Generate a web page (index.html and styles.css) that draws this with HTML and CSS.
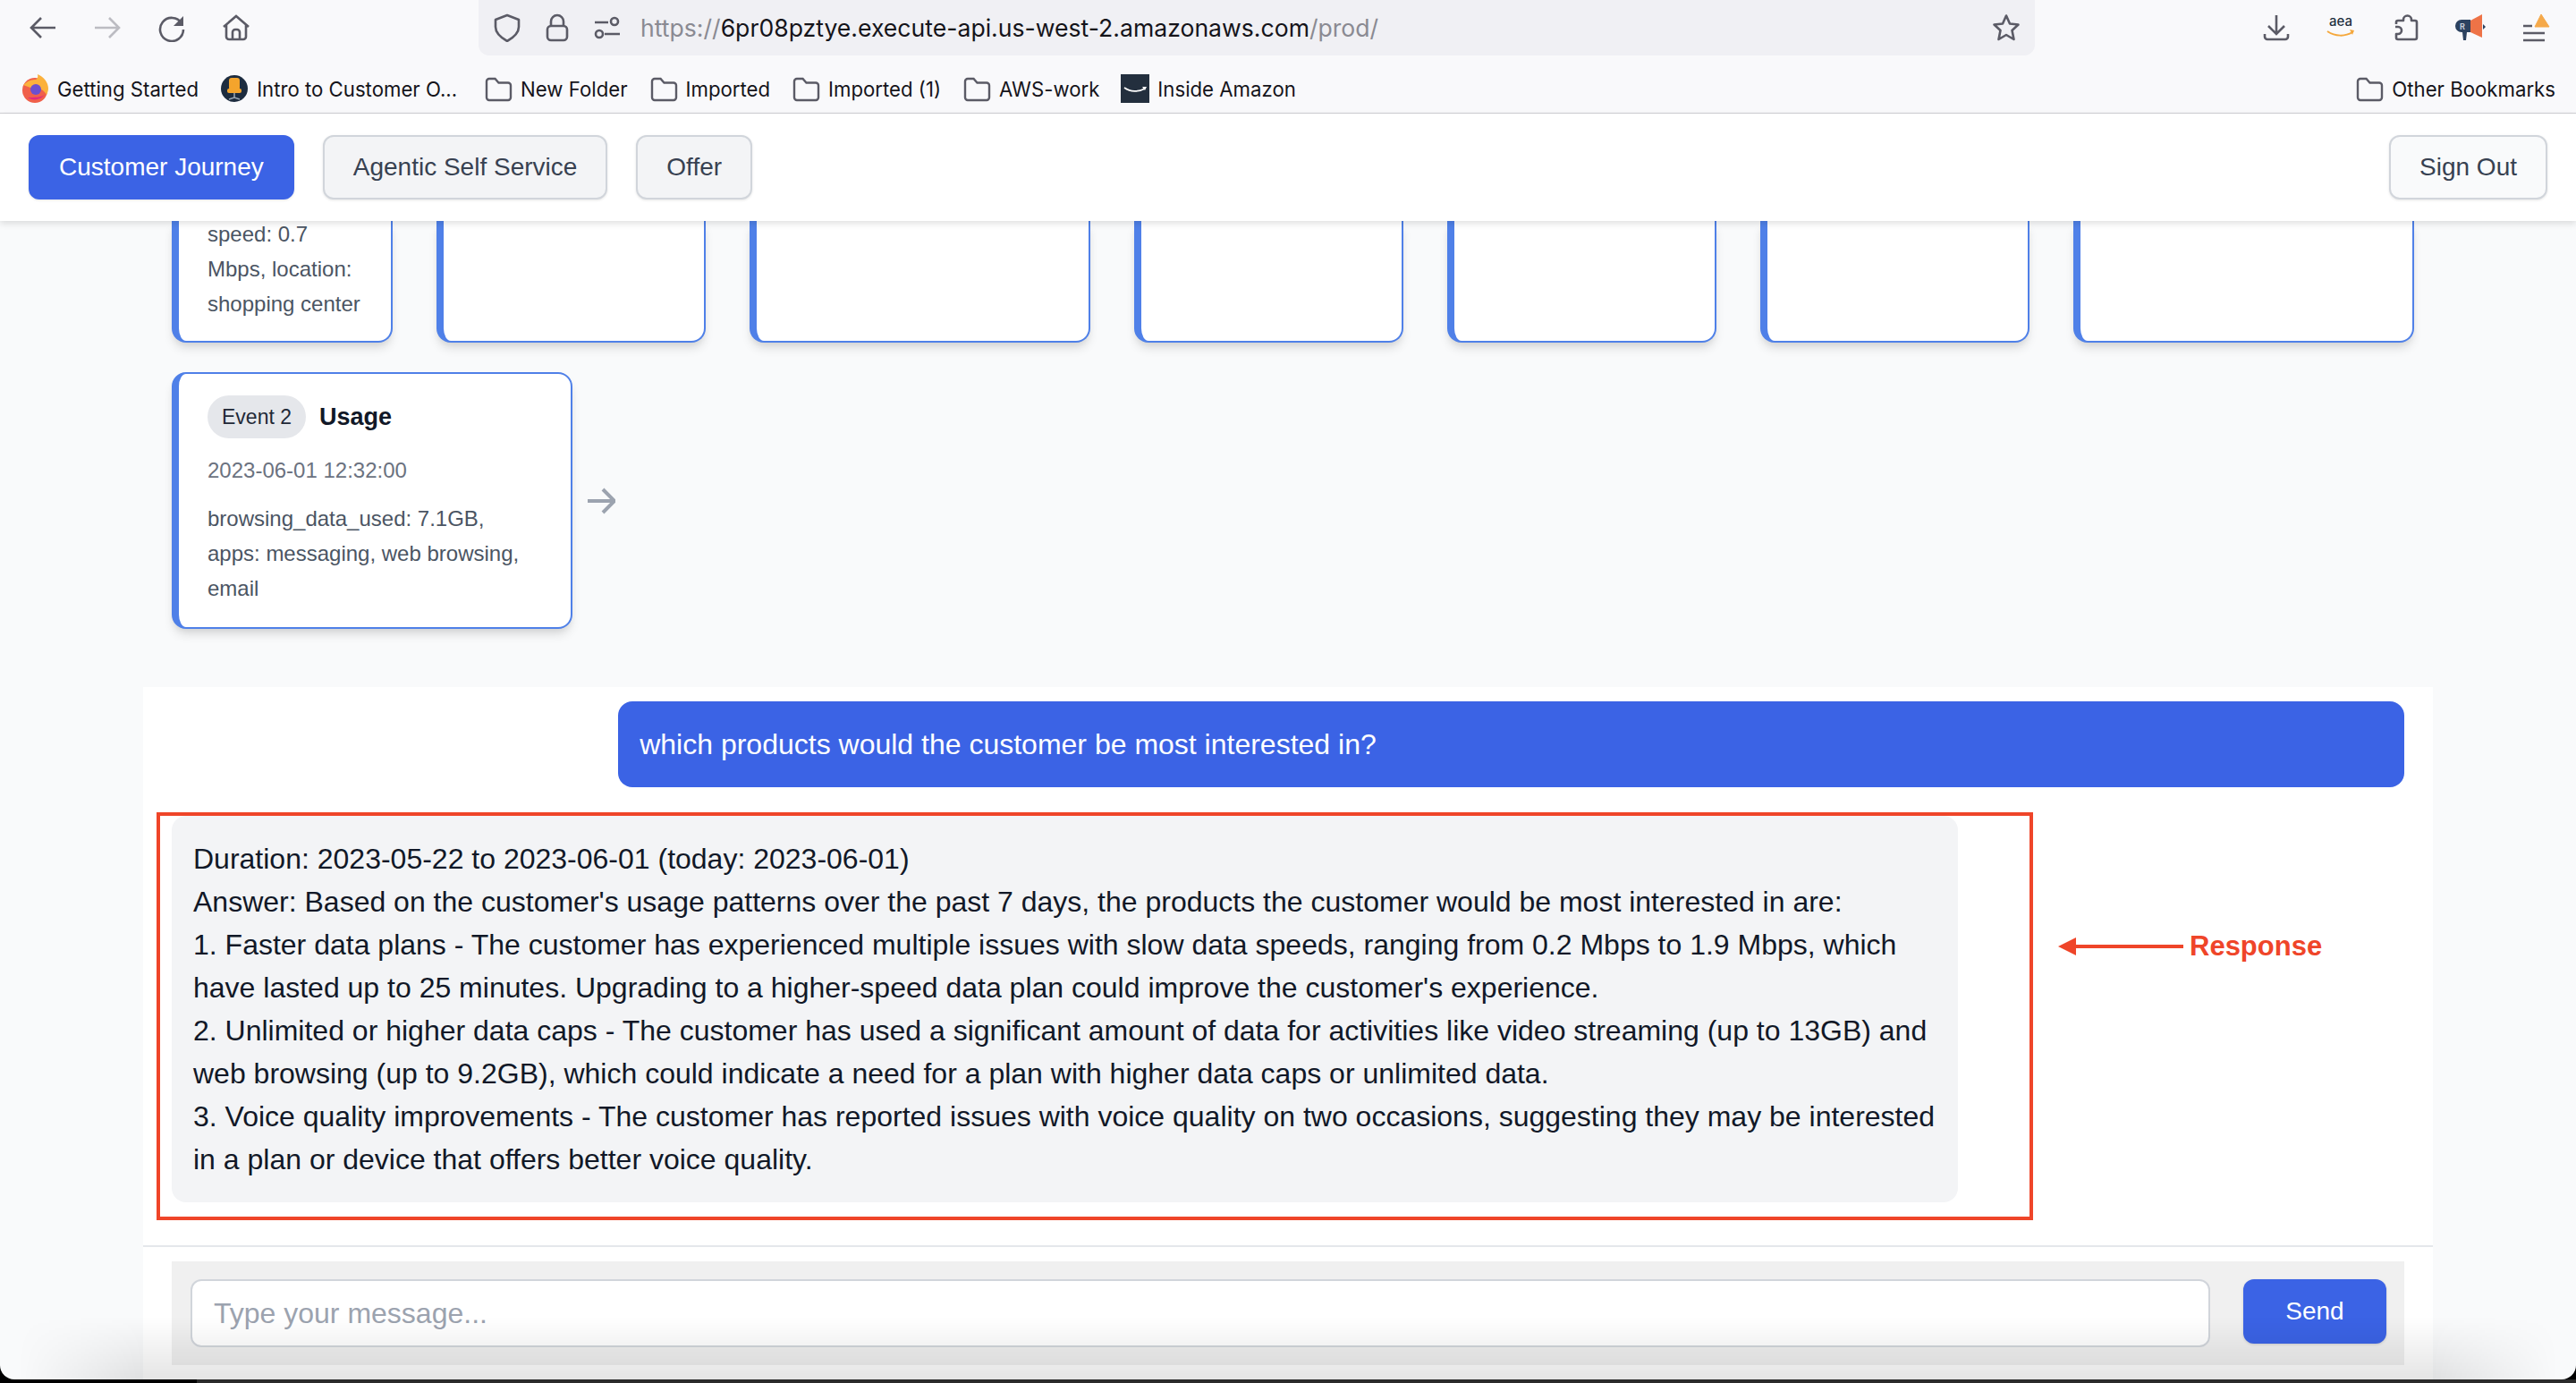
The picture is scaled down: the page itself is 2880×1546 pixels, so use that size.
FILE: index.html
```html
<!DOCTYPE html>
<html lang="en">
<head>
    <meta charset="UTF-8">
    <title>Customer Journey</title>
    <link rel="stylesheet" href="styles.css">
</head>
<body>
    <svg class="icon-defs" width="0" height="0">
        <symbol id="folder" viewBox="0 0 32 32">
            <path d="M3 8a3 3 0 0 1 3-3h6.500l4 4.500H27a3 3 0 0 1 3 3V26a3 3 0 0 1-3 3H6a3 3 0 0 1-3-3z" fill="none" stroke="#5b5b66" stroke-width="2.400"/>
        </symbol>
    </svg>

    <div class="window">
        <!-- browser toolbar -->
        <header class="browser-bar">
            <div class="toolbar">
                <svg class="icon" viewBox="0 0 32 32"><path d="M30 16H3M14 5 3 16l11 11"/></svg>
                <svg class="icon icon-off" viewBox="0 0 32 32"><path d="M2 16h27M18 5l11 11-11 11"/></svg>
                <svg class="icon" viewBox="0 0 32 32"><path d="M27 11a13 13 0 1 0 2 7"/><path class="solid" d="M29 3v11H18z"/></svg>
                <svg class="icon" viewBox="0 0 32 32"><path d="M2 15 16 3l14 12M5 13v13a3 3 0 0 0 3 3h16a3 3 0 0 0 3-3V13M12 29v-8a3 3 0 0 1 3-3h2a3 3 0 0 1 3 3v8"/></svg>

                <div class="url-bar">
                    <svg class="icon" viewBox="0 0 32 32"><path d="M16 2l13 5v8c0 7-6 12-13 16C9 27 3 22 3 15V7z" stroke-linejoin="round"/></svg>
                    <svg class="icon" viewBox="0 0 32 32"><rect x="5" y="14" width="22" height="16" rx="4"/><path d="M9 14V9a7 7 0 0 1 14 0v5"/></svg>
                    <svg class="icon" viewBox="0 0 32 32"><path d="M2 10h15M13 23h17"/><circle cx="24" cy="9" r="4"/><circle cx="7" cy="23" r="4"/></svg>
                    <span class="url"><span class="url-dim">https://</span>6pr08pztye.execute-api.us-west-2.amazonaws.com<span class="url-dim">/prod/</span></span>
                    <svg class="icon star" viewBox="0 0 32 32"><path d="M16 2.500l4 9 9.500 1-7 6.500 2 10-8.500-5-8.500 5 2-10-7-6.500 9.500-1z" stroke-linejoin="round"/></svg>
                </div>

                <svg class="icon" viewBox="0 0 32 32"><path d="M16 2v21M7 14l9 9 9-9M3 23v3a3 3 0 0 0 3 3h20a3 3 0 0 0 3-3v-3"/></svg>
                <svg class="addon" viewBox="0 0 32 32">
                    <text x="16" y="14" class="aea">aea</text>
                    <path d="M1 20c9 6 20 6 28 1" fill="none" stroke="#f5a83c" stroke-width="2"/>
                    <path d="M26 18l5 1-2 5z" fill="#f5a83c"/>
                </svg>
                <svg class="icon" viewBox="0 0 32 32"><path d="M6 12V10a2 2 0 0 1 2-2h6V7a4.500 4.500 0 0 1 9 0v1h4a2 2 0 0 1 2 2v17a2 2 0 0 1-2 2H8a2 2 0 0 1-2-2v-4h2a4 4 0 0 0 0-8H5" stroke-linejoin="round"/></svg>
                <svg class="addon" viewBox="0 0 32 32">
                    <path d="M7 7h10v14h-4l-1 9H9l-1-9H7a7 7 0 0 1 0-14z" fill="#2c4260"/>
                    <path d="M17 8 30 1v26l-13-6z" fill="#ee7347"/>
                    <path d="M31 12l3 3-3 3z" fill="#2c4260"/>
                    <text x="8" y="18" class="addon-r">R</text>
                </svg>
                <svg class="addon menu-icon" viewBox="0 0 32 32">
                    <path d="M4 14h10M4 22h24M4 30h24" stroke="#5b5b66" stroke-width="2.400" fill="none"/>
                    <path d="M24 1l9 14H17z" fill="#f5a94a" stroke="#f5a94a" stroke-linejoin="round"/>
                </svg>
            </div>

            <nav class="bookmarks">
                <a class="bookmark">
                    <svg class="favicon" viewBox="0 0 32 32">
                        <circle cx="16" cy="18" r="14" fill="#f0604a"/>
                        <path d="M3 12c4-4 8-6 13-6 2 0 4-2 3-6 7 3 12 9 12 16 0 2-1 5-2 7-3-6-10-9-18-8z" fill="#fbb13c"/>
                        <circle cx="17" cy="17" r="6" fill="#6b4fcf"/>
                        <path d="M8 26c6 4 14 3 19-3-4 3-12 3-19 3z" fill="#e22a7c"/>
                    </svg>
                    Getting Started
                </a>
                <a class="bookmark bookmark-long">
                    <svg class="favicon" viewBox="0 0 32 32">
                        <circle cx="16" cy="16" r="15" fill="#1d2c3f"/>
                        <rect x="10" y="4" width="12" height="14" rx="3" fill="#f4a42c"/>
                        <rect x="8" y="16" width="16" height="5" rx="2" fill="#f4a42c"/>
                        <path d="M16 21v5M10 28l6-2 6 2" stroke="#9aa6b2" stroke-width="1.500" fill="none"/>
                    </svg>
                    Intro to Customer O...
                </a>
                <a class="bookmark"><svg class="favicon"><use href="#folder"/></svg>New Folder</a>
                <a class="bookmark"><svg class="favicon"><use href="#folder"/></svg>Imported</a>
                <a class="bookmark"><svg class="favicon"><use href="#folder"/></svg>Imported (1)</a>
                <a class="bookmark"><svg class="favicon"><use href="#folder"/></svg>AWS-work</a>
                <a class="bookmark">
                    <svg class="favicon" viewBox="0 0 32 32">
                        <rect width="32" height="32" fill="#232f3e"/>
                        <path d="M4 15c7 5 16 5 23 1" fill="none" stroke="#fff" stroke-width="1.600"/>
                        <path d="M24 14l5 0-2 4z" fill="#fff"/>
                    </svg>
                    Inside Amazon
                </a>
                <a class="bookmark bookmark-end"><svg class="favicon"><use href="#folder"/></svg>Other Bookmarks</a>
            </nav>
        </header>

        <!-- app navigation -->
        <div class="app-nav">
            <button class="nav-btn nav-btn-active">Customer Journey</button>
            <button class="nav-btn">Agentic Self Service</button>
            <button class="nav-btn">Offer</button>
            <button class="nav-btn sign-out">Sign Out</button>
        </div>

        <main class="page">
            <section class="timeline">
                <div class="event-row event-row-cut">
                    <div class="event-card w-1">
                        <p class="event-text">speed: 0.7<br>Mbps, location:<br>shopping center</p>
                    </div>
                    <div class="event-card w-2"></div>
                    <div class="event-card w-3"></div>
                    <div class="event-card w-4"></div>
                    <div class="event-card w-4"></div>
                    <div class="event-card w-4"></div>
                    <div class="event-card w-3"></div>
                </div>
                <div class="event-row">
                    <div class="event-card w-full">
                        <div class="event-head">
                            <span class="event-pill">Event 2</span>
                            <span class="event-title">Usage</span>
                        </div>
                        <p class="event-date">2023-06-01 12:32:00</p>
                        <p class="event-text">browsing_data_used: 7.1GB,<br>apps: messaging, web browsing,<br>email</p>
                    </div>
                    <svg class="event-arrow" viewBox="0 0 32 32"><path d="M1 16h29M18 3l13 13-13 13"/></svg>
                </div>
            </section>

            <section class="chat">
                <div class="messages">
                    <div class="bubble bubble-user">which products would the customer be most interested in?</div>
                    <div class="bubble bubble-bot">
                        Duration: 2023-05-22 to 2023-06-01 (today: 2023-06-01)<br>
                        Answer: Based on the customer's usage patterns over the past 7 days, the products the customer would be most interested in are:<br>
                        1. Faster data plans - The customer has experienced multiple issues with slow data speeds, ranging from 0.2 Mbps to 1.9 Mbps, which have lasted up to 25 minutes. Upgrading to a higher-speed data plan could improve the customer's experience.<br>
                        2. Unlimited or higher data caps - The customer has used a significant amount of data for activities like video streaming (up to 13GB) and web browsing (up to 9.2GB), which could indicate a need for a plan with higher data caps or unlimited data.<br>
                        3. Voice quality improvements - The customer has reported issues with voice quality on two occasions, suggesting they may be interested in a plan or device that offers better voice quality.
                    </div>
                    <div class="note-box"></div>
                    <div class="note-label">
                        <span class="note-head"></span>
                        <span class="note-line"></span>
                        <span class="note-text">Response</span>
                    </div>
                </div>
                <form class="chat-form">
                    <input class="chat-input" type="text" placeholder="Type your message...">
                    <button class="send-btn" type="button">Send</button>
                </form>
            </section>
        </main>

        <div class="screen-shade"></div>
    </div>
    <div class="dock-edge"></div>
</body>
</html>
```

FILE: styles.css
```css
* {
    box-sizing: border-box;
}

html, body {
    margin: 0;
    height: 1546px;
    overflow: hidden;
    background-color: #000;
}

body {
    font-family: "Liberation Sans", Arial, sans-serif;
    position: relative;
}

.icon-defs {
    position: absolute;
}

.window {
    position: relative;
    height: 1542px;
    display: flex;
    flex-direction: column;
    border-radius: 0 0 16px 16px;
    overflow: hidden;
    background-color: #f9fafb;
}

.dock-edge {
    height: 4px;
    margin-left: 220px;
    background-color: #2b2b2b;
}

/* browser chrome */
.browser-bar {
    flex: none;
    height: 127px;
    background-color: #f9f9fb;
    border-bottom: 1px solid #cfcfd3;
    font-family: Inter, "Noto Sans", sans-serif;
}

.toolbar {
    height: 62px;
    display: flex;
    align-items: center;
    gap: 40px;
    padding: 0 32px;
}

.icon {
    flex: none;
    width: 32px;
    height: 32px;
    fill: none;
    stroke: #5b5b66;
    stroke-width: 2.600;
}

.icon-off {
    stroke: #bcbcc2;
}

.icon .solid {
    fill: #5b5b66;
    stroke: none;
}

.addon {
    flex: none;
    width: 32px;
    height: 32px;
    overflow: visible;
}

.aea {
    font-family: Inter, sans-serif;
    font-size: 15px;
    font-weight: 500;
    fill: #232f3e;
    text-anchor: middle;
}

.addon-r {
    font-family: Inter, sans-serif;
    font-size: 9px;
    font-weight: 700;
    fill: #c3cbd6;
    text-anchor: middle;
}

.url-bar {
    flex: none;
    width: 1740px;
    height: 62px;
    margin: 0 214px 0 215px;
    padding: 0 16px;
    display: flex;
    align-items: center;
    gap: 24px;
    background-color: #f0f0f4;
    border-radius: 0 0 12px 12px;
}

.url {
    flex: 1;
    margin-left: -3px;
    font-size: 26.600px;
    color: #15141a;
    white-space: nowrap;
}

.url-dim {
    color: #8a8a92;
}

.bookmarks {
    height: 64px;
    display: flex;
    align-items: center;
    gap: 24px;
    padding: 10px 23px 0 23px;
}

.bookmark {
    display: flex;
    align-items: center;
    gap: 9px;
    font-size: 22.200px;
    color: #15141a;
    white-space: nowrap;
}

.bookmark-long {
    margin-right: 6px;
}

.bookmark-end {
    margin-left: auto;
}

.favicon {
    flex: none;
    width: 32px;
    height: 32px;
}

/* app nav */
.app-nav {
    flex: none;
    position: relative;
    z-index: 2;
    height: 120px;
    display: flex;
    align-items: center;
    gap: 32px;
    padding: 0 32px;
    background-color: #fff;
    box-shadow: 0 3px 7px rgba(0, 0, 0, 0.12);
}

.nav-btn {
    height: 72px;
    padding: 0 32px;
    font-family: inherit;
    font-size: 28px;
    color: #374151;
    background-color: #f3f4f6;
    border: 2px solid #d1d5db;
    border-radius: 12px;
    box-shadow: 0 1px 3px rgba(0, 0, 0, 0.1);
}

.nav-btn-active {
    color: #fff;
    background-color: #3b63e5;
    border-color: #3b63e5;
}

.sign-out {
    margin-left: auto;
    background-color: #f9fafb;
}

/* timeline */
.page {
    flex: 1;
    min-height: 0;
    display: flex;
    flex-direction: column;
}

.timeline {
    flex: none;
    height: 521px;
    padding-left: 192px;
}

.event-row {
    display: flex;
    align-items: center;
    gap: 16px;
}

.event-row-cut {
    height: 136px;
    gap: 49px;
    margin-bottom: 33px;
    align-items: stretch;
}

.event-card {
    flex: none;
    padding: 24px 32px;
    background-color: #fff;
    border: 2px solid #4f80e8;
    border-left-width: 8px;
    border-radius: 16px;
    box-shadow: 0 8px 12px -2px rgba(0, 0, 0, 0.12), 0 4px 8px -4px rgba(0, 0, 0, 0.1);
}

.event-row-cut .event-card {
    display: flex;
    flex-direction: column;
    justify-content: flex-end;
    padding-bottom: 22px;
    border-top: none;
    border-radius: 0 0 16px 16px;
}

.w-1 { width: 247px; }
.w-2 { width: 301px; }
.w-3 { width: 381px; }
.w-4 { width: 301px; }
.w-full { width: 448px; height: 287px; }

.event-head {
    display: flex;
    align-items: center;
    gap: 15px;
}

.event-pill {
    height: 48px;
    padding: 0 16px;
    display: flex;
    align-items: center;
    font-size: 23px;
    color: #1f2937;
    background-color: #e5e7eb;
    border-radius: 24px;
}

.event-title {
    font-size: 27px;
    font-weight: 700;
    color: #111827;
}

.event-date {
    margin: 18px 0 16px;
    font-size: 24px;
    line-height: 36px;
    color: #6b7280;
}

.event-text {
    margin: 0;
    font-size: 24px;
    line-height: 39px;
    color: #4b5563;
}

.event-arrow {
    flex: none;
    width: 32px;
    height: 32px;
    fill: none;
    stroke: #9ca3af;
    stroke-width: 4;
}

/* chat */
.chat {
    flex: 1;
    min-height: 0;
    margin: 0 160px;
    background-color: #fff;
    display: flex;
    flex-direction: column;
}

.messages {
    position: relative;
    flex: none;
    height: 626px;
    padding: 16px 32px 0;
    border-bottom: 2px solid #e5e7eb;
    display: flex;
    flex-direction: column;
    gap: 32px;
}

.bubble {
    width: 80%;
    font-size: 32px;
    line-height: 48px;
    border-radius: 16px;
}

.bubble-user {
    align-self: flex-end;
    padding: 24px;
    color: #fff;
    background-color: #3b63e5;
}

.bubble-bot {
    padding: 24px;
    color: #111827;
    background-color: #f3f4f6;
}

/* red annotation on top of the response */
.note-box {
    position: absolute;
    left: 15px;
    top: 140px;
    width: 2098px;
    height: 456px;
    border: 4px solid #ef4529;
}

.note-label {
    position: absolute;
    left: 2141px;
    top: 272px;
    display: flex;
    align-items: center;
}

.note-head {
    width: 0;
    height: 0;
    border-top: 10px solid transparent;
    border-bottom: 10px solid transparent;
    border-right: 20px solid #ef4529;
}

.note-line {
    width: 120px;
    height: 4px;
    background-color: #ef4529;
}

.note-text {
    margin-left: 7px;
    font-size: 31px;
    font-weight: 700;
    color: #ef4529;
}

.chat-form {
    margin: 16px 32px 0;
    height: 116px;
    padding: 20px 20px 0 21px;
    display: flex;
    align-items: flex-start;
    gap: 37px;
    background-color: #f0f0f0;
}

.chat-input {
    flex: 1;
    height: 76px;
    padding: 0 24px;
    font-family: inherit;
    font-size: 32px;
    color: #111827;
    background-color: #fff;
    border: 2px solid #d1d5db;
    border-radius: 12px;
}

.chat-input::placeholder {
    color: #9ca3af;
}

.send-btn {
    width: 160px;
    height: 72px;
    font-family: inherit;
    font-size: 28px;
    color: #fff;
    background-color: #3b63e5;
    border: none;
    border-radius: 12px;
    box-shadow: 0 1px 3px rgba(0, 0, 0, 0.15);
}

/* darkening along the bottom edge of the screenshot */
.screen-shade {
    position: absolute;
    left: 0;
    right: 0;
    bottom: 0;
    height: 70px;
    z-index: 3;
    pointer-events: none;
    background: linear-gradient(to bottom, rgba(0, 0, 0, 0), rgba(0, 0, 0, 0.1));
    -webkit-mask-image: linear-gradient(to right, transparent 20px, #000 160px, #000 2720px, transparent 2860px);
    mask-image: linear-gradient(to right, transparent 20px, #000 160px, #000 2720px, transparent 2860px);
}
```
